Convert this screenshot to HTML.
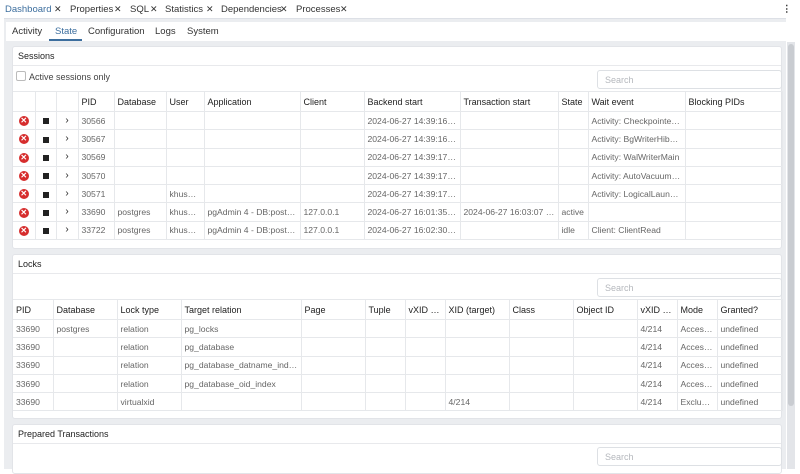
<!DOCTYPE html>
<html><head><meta charset="utf-8"><style>
*{margin:0;padding:0;box-sizing:border-box}
body{width:800px;height:469px;overflow:hidden;background:#fff;font-family:"Liberation Sans",sans-serif;font-size:9px;color:#222;position:relative}
.abs{position:absolute}
.tabs span{position:absolute;top:4px;font-size:9.5px;color:#333}
.tabs span.x{font-size:9px;top:4px}
.bg{left:4px;top:18px;width:782px;height:451px;background:#ebedf0;border-top:1px solid #dde0e6}
.panel{position:absolute;left:12px;width:770px;background:#fff;border:1px solid #e2e4e8;border-radius:3px}
.ph{height:19px;border-bottom:1px solid #e8e9ec;padding:4px 5px;font-size:9px;color:#222}
.search{position:absolute;left:584px;width:185px;height:19px;border:1px solid #dde0e4;border-radius:3px;color:#b5b8bd;padding:4px 7px;font-size:9px}
table{position:absolute;left:0;border-collapse:collapse;table-layout:fixed}
td{border:1px solid #e6e8eb;height:18.3px;padding:0 3px;white-space:nowrap;overflow:hidden;text-overflow:ellipsis;color:#666;font-size:8.6px;line-height:10px}
tr.h td{height:20px;color:#222;font-size:9px}
td:first-child{border-left:none}
.ic{text-align:center;padding:0}
.xc{display:inline-block;width:10px;height:10px;border-radius:50%;background:#d62d2d;color:#fff;font-size:8px;line-height:10px;font-weight:bold;vertical-align:middle}
.sq{display:inline-block;width:6px;height:6px;background:#222;vertical-align:middle}
.ch{color:#222;font-size:10px}
</style></head><body>
<div class="tabs">
<span style="left:5px;color:#3c6e9e">Dashboard</span><span class="x" style="left:54px">✕</span>
<span style="left:70px">Properties</span><span class="x" style="left:114px">✕</span>
<span style="left:130px">SQL</span><span class="x" style="left:150px">✕</span>
<span style="left:165px">Statistics</span><span class="x" style="left:206px">✕</span>
<span style="left:221px">Dependencies</span><span class="x" style="left:280px">✕</span>
<span style="left:296px">Processes</span><span class="x" style="left:340px">✕</span>
<span style="left:782px;font-weight:bold">⋮</span>
</div>
<div class="abs bg"></div>
<div class="abs" style="left:6px;top:22px;width:788px;height:19px;background:#fff"></div>
<div class="tabs">
<span style="left:12px;top:26px">Activity</span>
<span style="left:55px;top:26px;color:#3c6e9e">State</span>
<span style="left:88px;top:26px">Configuration</span>
<span style="left:155px;top:26px">Logs</span>
<span style="left:187px;top:26px">System</span>
</div>
<div class="abs" style="left:49px;top:39px;width:33px;height:2px;background:#3c6e9e"></div>
<div class="abs" style="left:787px;top:42px;width:8px;height:427px;background:#e3e5e9"></div>
<div class="abs" style="left:788px;top:44px;width:6px;height:362px;background:#c9ccd1;border-radius:3px"></div>

<div class="panel" style="top:46px;height:203px">
<div class="ph">Sessions</div>
<div class="abs" style="left:3px;top:24px;width:10px;height:10px;border:1px solid #bbb;border-radius:2px"></div>
<div class="abs" style="left:16px;top:25px;color:#444">Active sessions only</div>
<div class="search" style="top:23px">Search</div>
<table style="top:44px;width:769px">
<colgroup><col style="width:22px"><col style="width:21px"><col style="width:22px"><col style="width:36px"><col style="width:52px"><col style="width:38px"><col style="width:96px"><col style="width:64px"><col style="width:96px"><col style="width:98px"><col style="width:30px"><col style="width:97px"><col style="width:97px"></colgroup>
<tr class="h"><td></td><td></td><td></td><td>PID</td><td>Database</td><td>User</td><td>Application</td><td>Client</td><td>Backend start</td><td>Transaction start</td><td>State</td><td>Wait event</td><td>Blocking PIDs</td></tr>
<tr><td class="ic"><span class="xc">✕</span></td><td class="ic"><span class="sq"></span></td><td class="ic ch">›</td><td>30566</td><td></td><td></td><td></td><td></td><td>2024-06-27 14:39:16 IST</td><td></td><td></td><td>Activity: CheckpointerMain</td><td></td></tr>
<tr><td class="ic"><span class="xc">✕</span></td><td class="ic"><span class="sq"></span></td><td class="ic ch">›</td><td>30567</td><td></td><td></td><td></td><td></td><td>2024-06-27 14:39:16 IST</td><td></td><td></td><td>Activity: BgWriterHibernate</td><td></td></tr>
<tr><td class="ic"><span class="xc">✕</span></td><td class="ic"><span class="sq"></span></td><td class="ic ch">›</td><td>30569</td><td></td><td></td><td></td><td></td><td>2024-06-27 14:39:17 IST</td><td></td><td></td><td>Activity: WalWriterMain</td><td></td></tr>
<tr><td class="ic"><span class="xc">✕</span></td><td class="ic"><span class="sq"></span></td><td class="ic ch">›</td><td>30570</td><td></td><td></td><td></td><td></td><td>2024-06-27 14:39:17 IST</td><td></td><td></td><td>Activity: AutoVacuumMain</td><td></td></tr>
<tr><td class="ic"><span class="xc">✕</span></td><td class="ic"><span class="sq"></span></td><td class="ic ch">›</td><td>30571</td><td></td><td>khushboo</td><td></td><td></td><td>2024-06-27 14:39:17 IST</td><td></td><td></td><td>Activity: LogicalLauncherMain</td><td></td></tr>
<tr><td class="ic"><span class="xc">✕</span></td><td class="ic"><span class="sq"></span></td><td class="ic ch">›</td><td>33690</td><td>postgres</td><td>khushboo</td><td>pgAdmin 4 - DB:postgres</td><td>127.0.0.1</td><td>2024-06-27 16:01:35 IST</td><td>2024-06-27 16:03:07 IST</td><td>active</td><td></td><td></td></tr>
<tr><td class="ic"><span class="xc">✕</span></td><td class="ic"><span class="sq"></span></td><td class="ic ch">›</td><td>33722</td><td>postgres</td><td>khushboo</td><td>pgAdmin 4 - DB:postgres</td><td>127.0.0.1</td><td>2024-06-27 16:02:30 IST</td><td></td><td>idle</td><td>Client: ClientRead</td><td></td></tr>
</table>
</div>

<div class="panel" style="top:254px;height:165px">
<div class="ph">Locks</div>
<div class="search" style="top:23px">Search</div>
<table style="top:44px;width:769px">
<colgroup><col style="width:40px"><col style="width:64px"><col style="width:64px"><col style="width:120px"><col style="width:64px"><col style="width:40px"><col style="width:40px"><col style="width:64px"><col style="width:64px"><col style="width:64px"><col style="width:40px"><col style="width:40px"><col style="width:65px"></colgroup>
<tr class="h"><td>PID</td><td>Database</td><td>Lock type</td><td>Target relation</td><td>Page</td><td>Tuple</td><td>vXID (target)</td><td>XID (target)</td><td>Class</td><td>Object ID</td><td>vXID (owner)</td><td>Mode</td><td>Granted?</td></tr>
<tr><td>33690</td><td>postgres</td><td>relation</td><td>pg_locks</td><td></td><td></td><td></td><td></td><td></td><td></td><td>4/214</td><td>AccessShareLock</td><td>undefined</td></tr>
<tr><td>33690</td><td></td><td>relation</td><td>pg_database</td><td></td><td></td><td></td><td></td><td></td><td></td><td>4/214</td><td>AccessShareLock</td><td>undefined</td></tr>
<tr><td>33690</td><td></td><td>relation</td><td>pg_database_datname_index</td><td></td><td></td><td></td><td></td><td></td><td></td><td>4/214</td><td>AccessShareLock</td><td>undefined</td></tr>
<tr><td>33690</td><td></td><td>relation</td><td>pg_database_oid_index</td><td></td><td></td><td></td><td></td><td></td><td></td><td>4/214</td><td>AccessShareLock</td><td>undefined</td></tr>
<tr><td>33690</td><td></td><td>virtualxid</td><td></td><td></td><td></td><td></td><td>4/214</td><td></td><td></td><td>4/214</td><td>ExclusiveLock</td><td>undefined</td></tr>
</table>
</div>

<div class="panel" style="top:424px;height:50px">
<div class="ph">Prepared Transactions</div>
<div class="search" style="top:22px">Search</div>
</div>
</body></html>
